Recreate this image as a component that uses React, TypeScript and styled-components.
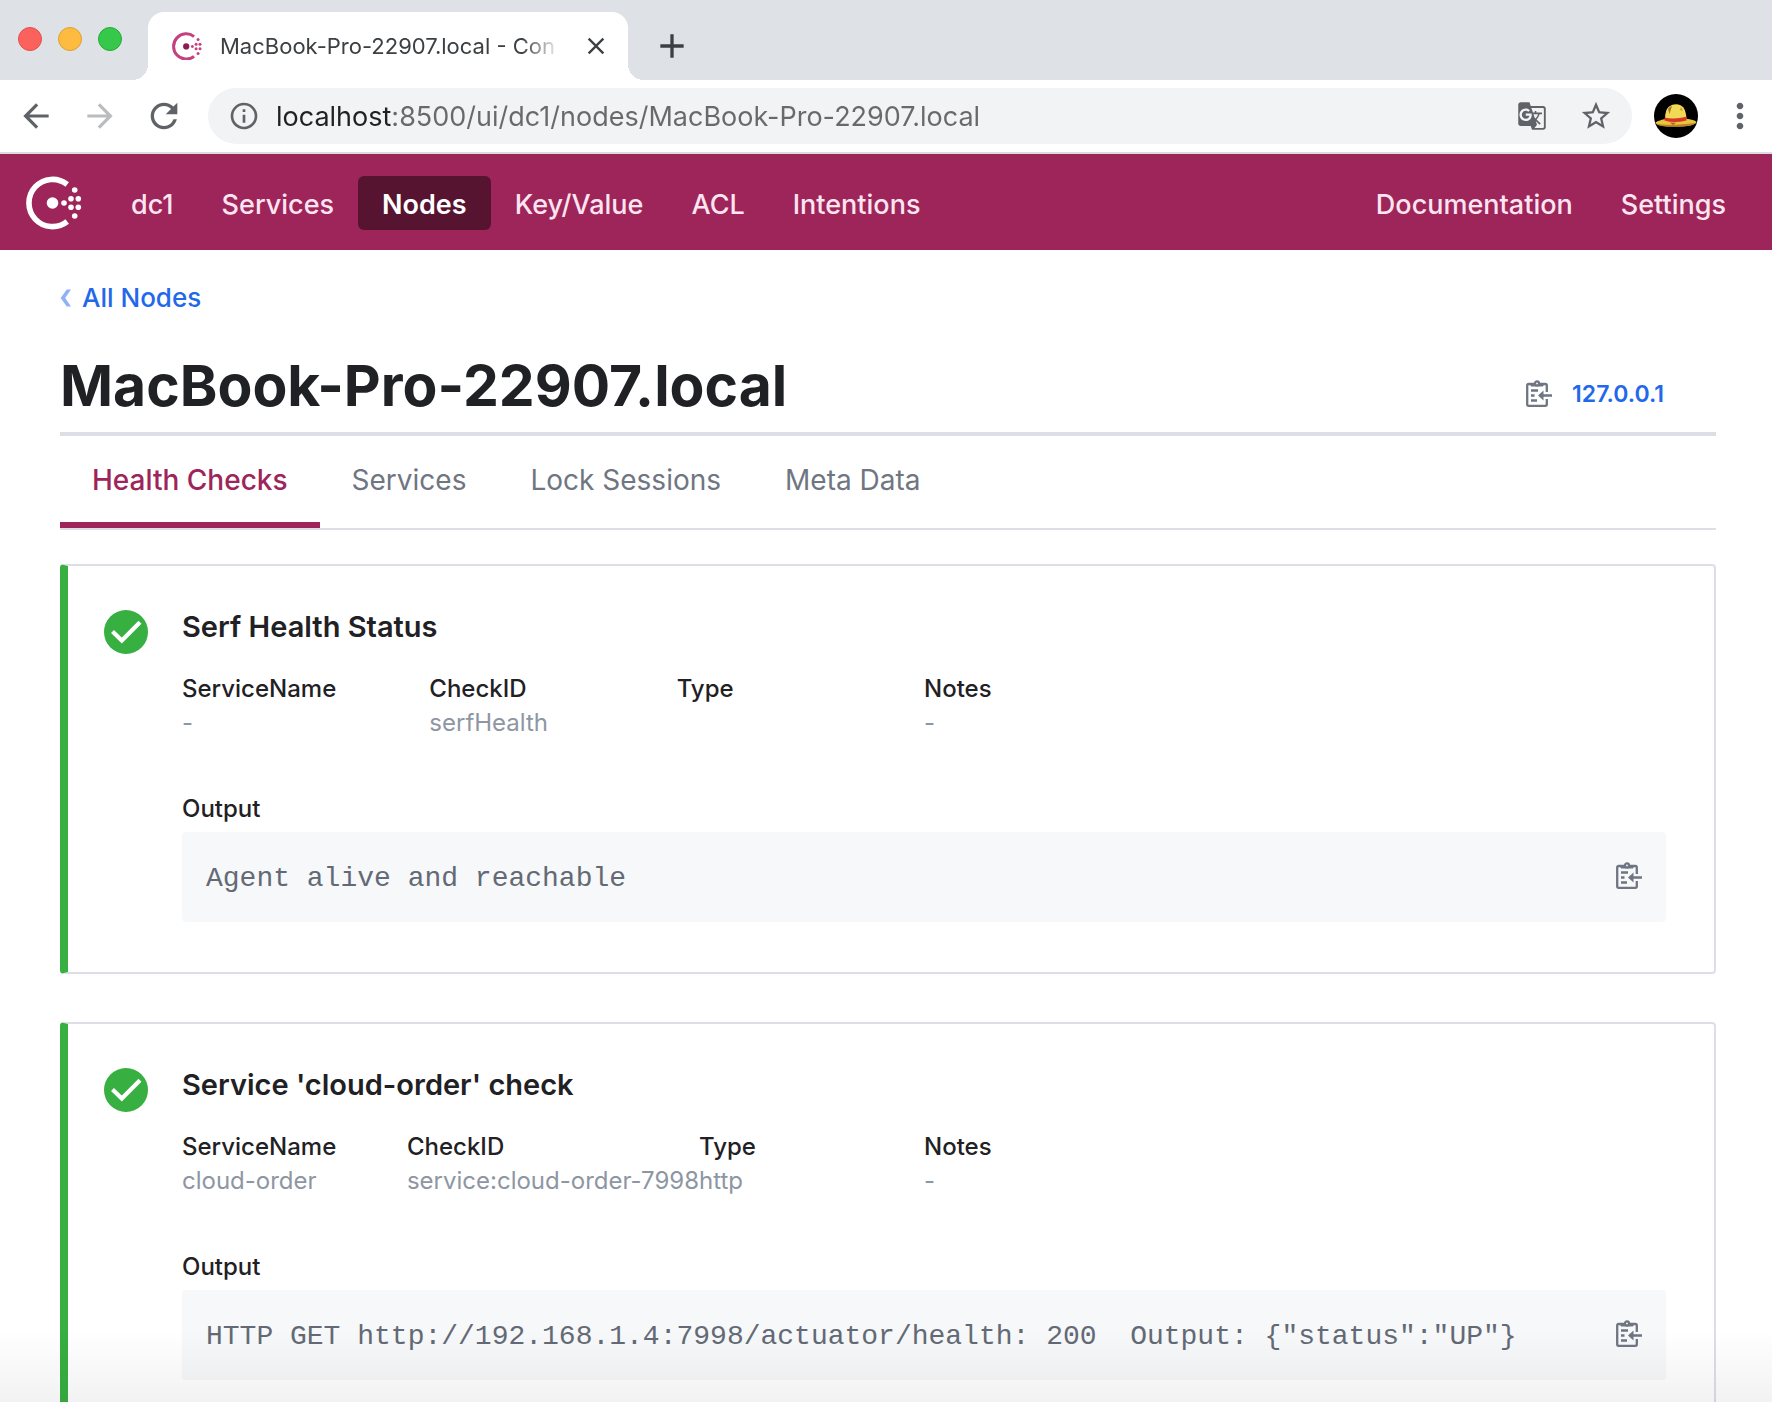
import React from "react";
import styled, { createGlobalStyle } from "styled-components";
import {
  MdAdd,
  MdArrowBack,
  MdArrowForward,
  MdClose,
  MdGTranslate,
  MdInfoOutline,
  MdMoreVert,
  MdRefresh,
  MdStarBorder,
} from "react-icons/md";

const colors = {
  magenta: "#9d2559",
  magentaDark: "#571431",
  pinkText: "#fde4f1",
  ink: "#1f2124",
  grey: "#6f7682",
  greyLight: "#8e96a3",
  line: "#dce0e6",
  blue: "#2368eb",
  green: "#37af41",
  chrome: "#dee1e6",
  chromeIcon: "#5f6368",
};

const GlobalStyle = createGlobalStyle`
  *, *::before, *::after { box-sizing: border-box; }
  body {
    margin: 0;
    background: #fff;
    color: ${colors.ink};
    font-family: Inter, "Liberation Sans", sans-serif;
  }
  a { color: inherit; text-decoration: none; }
  h1, h2, dl, dd, pre { margin: 0; }
`;

const Window = styled.div`
  display: flex;
  flex-direction: column;
  height: 100vh;
  overflow: hidden;
`;

/* ---------- browser chrome ---------- */

const TabStrip = styled.div`
  display: flex;
  flex: none;
  align-items: stretch;
  height: 80px;
  padding: 12px 0 0 18px;
  background: ${colors.chrome};
`;

const Lights = styled.div`
  display: flex;
  gap: 16px;
  width: 130px;
  padding-top: 15px;
`;

const Light = styled.button<{ $fill: string; $ring: string }>`
  width: 24px;
  height: 24px;
  padding: 0;
  border: 1px solid ${(p) => p.$ring};
  border-radius: 50%;
  background: ${(p) => p.$fill};
`;

const BrowserTab = styled.div`
  position: relative;
  display: flex;
  align-items: center;
  width: 480px;
  padding: 0 16px 0 24px;
  border-radius: 16px 16px 0 0;
  background: #fff;

  &::before,
  &::after {
    content: "";
    position: absolute;
    bottom: 0;
    width: 16px;
    height: 16px;
  }
  &::before {
    right: 100%;
    background: radial-gradient(circle at 0 0, transparent 16px, #fff 16px);
  }
  &::after {
    left: 100%;
    background: radial-gradient(circle at 100% 0, transparent 16px, #fff 16px);
  }
`;

const TabTitle = styled.span`
  margin: 0 auto 0 18px;
  white-space: nowrap;
  color: #3c4043;
  font-size: 22px;
  line-height: 32px;
  mask-image: linear-gradient(to right, #000 90%, rgba(0, 0, 0, 0.15) 100%);
`;

const IconButton = styled.button<{ $size?: number; $color?: string }>`
  display: flex;
  flex: none;
  align-items: center;
  justify-content: center;
  width: ${(p) => p.$size ?? 40}px;
  height: ${(p) => p.$size ?? 40}px;
  padding: 0;
  border: 0;
  background: none;
  color: ${(p) => p.$color ?? colors.chromeIcon};
`;

const NewTab = styled.div`
  display: flex;
  align-items: center;
  margin-left: 24px;
`;

const Toolbar = styled.div`
  display: flex;
  flex: none;
  align-items: center;
  height: 74px;
  padding: 0 12px 0 16px;
  border-bottom: 2px solid #d9dde2;
  background: #fff;
`;

const HistoryButtons = styled.div`
  display: flex;
  gap: 24px;
  width: 192px;
`;

const AddressBar = styled.form`
  display: flex;
  flex: 1;
  align-items: center;
  height: 56px;
  padding: 0 16px 0 20px;
  border-radius: 28px;
  background: #f1f3f4;
`;

const AddressInput = styled.input`
  flex: 1;
  min-width: 0;
  height: 40px;
  margin-left: 16px;
  padding: 0;
  border: 0;
  outline: 0;
  background: linear-gradient(to right, #202124 115px, #67696d 115px);
  background-clip: text;
  color: transparent;
  font: inherit;
  font-size: 27px;
`;

const AddressActions = styled.div`
  display: flex;
  gap: 24px;
`;

const Avatar = styled.button`
  flex: none;
  width: 44px;
  height: 44px;
  margin: 0 22px;
  padding: 0;
  overflow: hidden;
  border: 0;
  border-radius: 50%;
  background: #000;
`;

/* ---------- page ---------- */

const Viewport = styled.div`
  flex: 1;
  min-height: 0;
  overflow-y: auto;
  scrollbar-width: none;
`;

const NavBar = styled.header`
  display: flex;
  align-items: center;
  padding: 22px 22px 20px 26px;
  background: ${colors.magenta};
`;

const LogoLink = styled.a`
  display: flex;
  width: 81px;
`;

const NavGroup = styled.nav<{ $end?: boolean }>`
  display: flex;
  margin-left: ${(p) => (p.$end ? "auto" : "0")};
`;

const NavLink = styled.a<{ $active?: boolean }>`
  padding: 3px 24px 0;
  border-radius: 6px;
  background: ${(p) => (p.$active ? colors.magentaDark : "transparent")};
  color: ${(p) => (p.$active ? "#fff" : colors.pinkText)};
  font-size: 27px;
  font-weight: ${(p) => (p.$active ? 600 : 500)};
  line-height: 51px;
`;

const Main = styled.main`
  padding: 30px 56px 48px 60px;
`;

const Breadcrumb = styled.a`
  display: inline-flex;
  align-items: center;
  gap: 11px;
  color: ${colors.blue};
  font-size: 26px;
  font-weight: 500;
  line-height: 36px;
`;

const PageHeader = styled.div`
  display: flex;
  align-items: flex-end;
  justify-content: space-between;
  margin-top: 36px;
  padding: 0 52px 12px 0;
  border-bottom: 4px solid ${colors.line};
`;

const PageTitle = styled.h1`
  font-size: 57px;
  font-weight: 700;
  line-height: 68px;
`;

const Address = styled.div`
  display: flex;
  align-items: center;
  gap: 20px;
  padding-bottom: 12px;
  color: ${colors.blue};
  font-size: 23px;
  font-weight: 600;
  line-height: 28px;
`;

const CopyButton = styled.button`
  display: flex;
  flex: none;
  padding: 0;
  border: 0;
  background: none;
  color: ${colors.grey};
`;

const Tabs = styled.nav`
  display: flex;
  border-bottom: 2px solid ${colors.line};
`;

const Tab = styled.a<{ $active?: boolean }>`
  padding: 26px 32px 24px;
  border-bottom: 6px solid ${(p) => (p.$active ? colors.magenta : "transparent")};
  color: ${(p) => (p.$active ? colors.magenta : colors.grey)};
  font-size: 28px;
  font-weight: ${(p) => (p.$active ? 500 : 400)};
  line-height: 36px;
`;

const CheckList = styled.div`
  display: flex;
  flex-direction: column;
  gap: 48px;
  margin-top: 34px;
`;

const Card = styled.article`
  display: flex;
  gap: 34px;
  padding: 44px 48px 50px 36px;
  border: 2px solid ${colors.line};
  border-left: 8px solid ${colors.green};
  border-radius: 4px;
`;

const CardBody = styled.div`
  flex: 1;
  min-width: 0;
`;

const CardTitle = styled.h2`
  margin-bottom: 28px;
  font-size: 29px;
  font-weight: 600;
  line-height: 34px;
`;

const Facts = styled.dl`
  display: grid;
  grid-template-columns: 1fr 1fr;
  margin-bottom: 52px;
`;

const FactGroup = styled.div`
  display: flex;
`;

const Fact = styled.div`
  flex: 1 1 0;
  white-space: nowrap;
`;

const Label = styled.dt`
  font-size: 24px;
  font-weight: 500;
  line-height: 34px;
`;

const Value = styled.dd`
  color: ${colors.greyLight};
  font-size: 24px;
  line-height: 34px;
`;

const OutputBox = styled.div`
  display: flex;
  align-items: flex-start;
  justify-content: space-between;
  margin-top: 6px;
  padding: 30px 24px 26px;
  border-radius: 4px;
  background: #f6f8fa;
`;

const OutputText = styled.pre`
  color: #646a75;
  font-family: "Liberation Mono", monospace;
  font-size: 28px;
  line-height: 34px;
`;

const BottomShade = styled.div`
  position: fixed;
  right: 0;
  bottom: 0;
  left: 0;
  height: 72px;
  background: linear-gradient(to bottom, rgba(0, 0, 0, 0), rgba(0, 0, 0, 0.05));
  pointer-events: none;
`;

/* ---------- drawings ---------- */

function ConsulLogo({ width, ring, core }: { width: number; ring: string; core: string }) {
  const dots = [
    [38, 27], [45, 22.7], [45, 31.3], [52.3, 22.7], [52.3, 31.3], [48.7, 14], [48.7, 40],
  ];
  return (
    <svg width={width} viewBox="0 0 56 54" fill={ring} aria-hidden="true">
      <path d="M41.2 8.5A23.6 23.6 0 1 0 41.2 45.5" fill="none" stroke={ring} strokeWidth="5.6" />
      <circle cx="26.5" cy="27" r="5.8" fill={core} />
      {dots.map(([x, y]) => (
        <circle key={`${x}-${y}`} cx={x} cy={y} r="2.8" />
      ))}
    </svg>
  );
}

function CopyIcon() {
  return (
    <svg width="26" height="28" viewBox="0 0 26 28" fill="none" stroke="currentColor" strokeWidth="2.3" aria-hidden="true">
      <path d="M20.800 12V5.500Q20.800 4 19.300 4H2.700Q1.200 4 1.200 5.500V24.300Q1.200 25.800 2.700 25.800H19.300Q20.800 25.800 20.800 24.300V19" />
      <path d="M5 4H17V6H5Z" fill="currentColor" strokeWidth="1" />
      <circle cx="11" cy="3.400" r="2" fill="#fff" />
      <path d="M5 10.500H12M5 15.500H8.500M5 20.500H11M16 15.500H26" />
      <path d="M12 15.500L17.500 10.500V20.500Z" fill="currentColor" stroke="none" />
    </svg>
  );
}

function PassingIcon() {
  return (
    <svg width="44" height="44" viewBox="0 0 44 44" role="img" aria-label="Passing">
      <circle cx="22" cy="22" r="22" fill={colors.green} />
      <path d="M8.5 21.5L17.8 30.6L36 12.3" fill="none" stroke="#fff" strokeWidth="4.2" />
    </svg>
  );
}

function BackChevron() {
  return (
    <svg width="11" height="18" viewBox="0 0 11 18" aria-hidden="true">
      <path d="M11 0.5H6.8L0.6 9L6.8 17.5H11L5.2 9Z" fill="#8fb1f7" />
    </svg>
  );
}

function StrawHat() {
  return (
    <svg width="44" height="44" viewBox="0 0 44 44" aria-hidden="true">
      <path d="M1.500 28.500Q5 26 12 25L32 24.800Q40 25.500 42.500 28Q41 31 33 32Q16 33.500 4 31Q2 30 1.500 28.500Z" fill="#e9c53a" />
      <path d="M2 29.500Q14 32.500 42 28.800Q38 32 30 32.400Q12 33.800 4 31Z" fill="#b9852a" />
      <path d="M11 25Q11 16 15 12.500Q21 8.500 27 11.500Q32 14 32.500 25Q21 29 11 25Z" fill="#f0da55" />
      <path d="M14 15Q16 12 18 12L15.500 20Z" fill="#a8762a" />
      <path d="M27 13L29 17L26 16Z" fill="#c79a38" />
      <path d="M10.500 23.500Q20 26 32.500 22.800V26.500Q20 29.500 10.500 26.500Z" fill="#d8352a" />
      <path d="M16 28.500L19 31L22 28.800Z" fill="#c05a26" />
    </svg>
  );
}

/* ---------- data ---------- */

const checks = [
  {
    name: "Serf Health Status",
    service: "-",
    id: "serfHealth",
    type: "",
    notes: "-",
    output: "Agent alive and reachable",
  },
  {
    name: "Service 'cloud-order' check",
    service: "cloud-order",
    id: "service:cloud-order-7998",
    type: "http",
    notes: "-",
    output: 'HTTP GET http://192.168.1.4:7998/actuator/health: 200  Output: {"status":"UP"}',
  },
];

const primaryLinks = ["dc1", "Services", "Nodes", "Key/Value", "ACL", "Intentions"];
const secondaryLinks = ["Documentation", "Settings"];
const tabs = ["Health Checks", "Services", "Lock Sessions", "Meta Data"];

function BrowserChrome() {
  return (
    <>
      <TabStrip>
        <Lights>
          <Light $fill="#fc625d" $ring="#e2504b" aria-label="Close window" />
          <Light $fill="#fdbc40" $ring="#dfa032" aria-label="Minimise window" />
          <Light $fill="#35c84a" $ring="#27aa35" aria-label="Zoom window" />
        </Lights>
        <BrowserTab>
          <ConsulLogo width={30} ring="#c5407f" core="#8c1d52" />
          <TabTitle>MacBook-Pro-22907.local - Con</TabTitle>
          <IconButton $size={32} $color="#3c4043" aria-label="Close tab">
            <MdClose size={28} />
          </IconButton>
        </BrowserTab>
        <NewTab>
          <IconButton $color="#3c4043" aria-label="New tab">
            <MdAdd size={40} />
          </IconButton>
        </NewTab>
      </TabStrip>
      <Toolbar>
        <HistoryButtons>
          <IconButton aria-label="Back"><MdArrowBack size={38} /></IconButton>
          <IconButton $color="#babcbe" aria-label="Forward"><MdArrowForward size={38} /></IconButton>
          <IconButton aria-label="Reload"><MdRefresh size={40} /></IconButton>
        </HistoryButtons>
        <AddressBar>
          <IconButton type="button" $size={32} aria-label="Site information"><MdInfoOutline size={32} /></IconButton>
          <AddressInput
            aria-label="Address"
            defaultValue="localhost:8500/ui/dc1/nodes/MacBook-Pro-22907.local"
          />
          <AddressActions>
            <IconButton type="button" aria-label="Translate page"><MdGTranslate size={30} /></IconButton>
            <IconButton type="button" aria-label="Bookmark page"><MdStarBorder size={34} /></IconButton>
          </AddressActions>
        </AddressBar>
        <Avatar aria-label="Profile"><StrawHat /></Avatar>
        <IconButton aria-label="Menu"><MdMoreVert size={40} /></IconButton>
      </Toolbar>
    </>
  );
}

export default function App() {
  return (
    <>
      <GlobalStyle />
      <Window>
        <BrowserChrome />
        <Viewport>
          <NavBar>
            <LogoLink href="#home" aria-label="Consul">
              <ConsulLogo width={56} ring="#fff" core="#fff" />
            </LogoLink>
            <NavGroup>
              {primaryLinks.map((label) => (
                <NavLink key={label} href="#nav" $active={label === "Nodes"}>{label}</NavLink>
              ))}
            </NavGroup>
            <NavGroup $end>
              {secondaryLinks.map((label) => (
                <NavLink key={label} href="#nav">{label}</NavLink>
              ))}
            </NavGroup>
          </NavBar>
          <Main>
            <Breadcrumb href="#nodes"><BackChevron />All Nodes</Breadcrumb>
            <PageHeader>
              <PageTitle>MacBook-Pro-22907.local</PageTitle>
              <Address>
                <CopyButton aria-label="Copy address"><CopyIcon /></CopyButton>
                <a href="#address">127.0.0.1</a>
              </Address>
            </PageHeader>
            <Tabs>
              {tabs.map((label, i) => (
                <Tab key={label} href="#tab" $active={i === 0}>{label}</Tab>
              ))}
            </Tabs>
            <CheckList>
              {checks.map((check) => (
                <Card key={check.name}>
                  <PassingIcon />
                  <CardBody>
                    <CardTitle>{check.name}</CardTitle>
                    <Facts>
                      <FactGroup>
                        <Fact><Label>ServiceName</Label><Value>{check.service}</Value></Fact>
                        <Fact><Label>CheckID</Label><Value>{check.id}</Value></Fact>
                        <Fact><Label>Type</Label><Value>{check.type}</Value></Fact>
                      </FactGroup>
                      <Fact><Label>Notes</Label><Value>{check.notes}</Value></Fact>
                    </Facts>
                    <Label as="div">Output</Label>
                    <OutputBox>
                      <OutputText>{check.output}</OutputText>
                      <CopyButton aria-label="Copy output"><CopyIcon /></CopyButton>
                    </OutputBox>
                  </CardBody>
                </Card>
              ))}
            </CheckList>
          </Main>
        </Viewport>
      </Window>
      <BottomShade />
    </>
  );
}
